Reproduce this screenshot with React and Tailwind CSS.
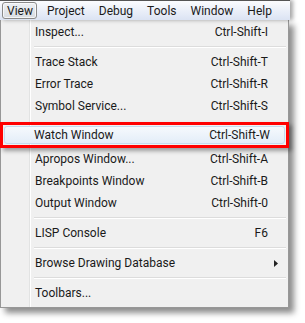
import React from "react";

const font = { fontFamily: 'Roboto, "Noto Sans", sans-serif' };

const menus = ["View", "Project", "Debug", "Tools", "Window", "Help"];

const Item = ({ label, shortcut, arrow }) => (
  <div className="flex items-center h-[22px] pl-[34px] pr-[20px]">
    <span className="flex-1">{label}</span>
    {shortcut && <span>{shortcut}</span>}
    {arrow && (
      <svg width="4" height="7" viewBox="0 0 4 7" className="mr-[-10px] ml-auto">
        <path d="M0 0 L4 3.5 L0 7 Z" fill="#222" />
      </svg>
    )}
  </div>
);

const Sep = () => (
  <div className="h-[8px] flex items-center pl-[33px] pr-[2px]">
    <div className="w-full h-[2px] border-t border-[#dcdcdc] border-b border-b-white" />
  </div>
);

const App = () => {
  return (
    <div className="w-[305px] h-[323px] bg-white text-[12px] text-[#1a1a1a]" style={font}>
      {/* menu bar */}
      <div className="w-[290px] h-[20px] border-t border-[#555] bg-gradient-to-b from-[#fbfcfe] to-[#dbe3f3] flex items-center pl-[2px] gap-[6px] shadow-[3px_0_4px_rgba(0,0,0,0.35)] relative z-10">
        {menus.map((m, i) => (
          <div
            key={m}
            className={
              i === 0
                ? "h-[17px] pl-[4px] pr-[3px] flex items-center rounded-[3px] border border-[#8a8a8a] bg-gradient-to-b from-[#eef0f3] to-[#d8dce2] shadow-[inset_0_0_0_1px_rgba(255,255,255,0.7)]"
                : "h-[17px] px-[4px] flex items-center"
            }
          >
            {m}
          </div>
        ))}
      </div>

      {/* dropdown panel */}
      <div className="relative w-[289px] h-[288px] bg-[#f0f0f0] border border-t-0 border-[#979797] shadow-[5px_5px_6px_rgba(0,0,0,0.45)] pt-[1px]">
        <div className="absolute left-[28px] top-0 bottom-0 w-[2px] border-l border-[#e2e3e3] border-r border-r-white" />
        <div className="relative">
          <Item label="Inspect..." shortcut="Ctrl-Shift-I" />
          <Sep />
          <Item label="Trace Stack" shortcut="Ctrl-Shift-T" />
          <Item label="Error Trace" shortcut="Ctrl-Shift-R" />
          <Item label="Symbol Service..." shortcut="Ctrl-Shift-S" />
          <div className="mt-[5px] -ml-px w-[289px] h-[26px] border-[3px] border-[#ff0000] shadow-[3px_3px_4px_rgba(0,0,0,0.35)] p-[1px]">
            <div className="h-full rounded-[3px] border border-[#c4dbf0] bg-gradient-to-b from-[#f6f9fd] to-[#e3edf8] flex items-center pl-[29px] pr-[14px]">
              <span className="flex-1">Watch Window</span>
              <span>Ctrl-Shift-W</span>
            </div>
          </div>
          <Item label="Apropos Window..." shortcut="Ctrl-Shift-A" />
          <Item label="Breakpoints Window" shortcut="Ctrl-Shift-B" />
          <Item label="Output Window" shortcut="Ctrl-Shift-0" />
          <Sep />
          <Item label="LISP Console" shortcut="F6" />
          <Sep />
          <Item label="Browse Drawing Database" arrow />
          <Sep />
          <Item label="Toolbars..." />
        </div>
      </div>
    </div>
  );
};

export default App;
